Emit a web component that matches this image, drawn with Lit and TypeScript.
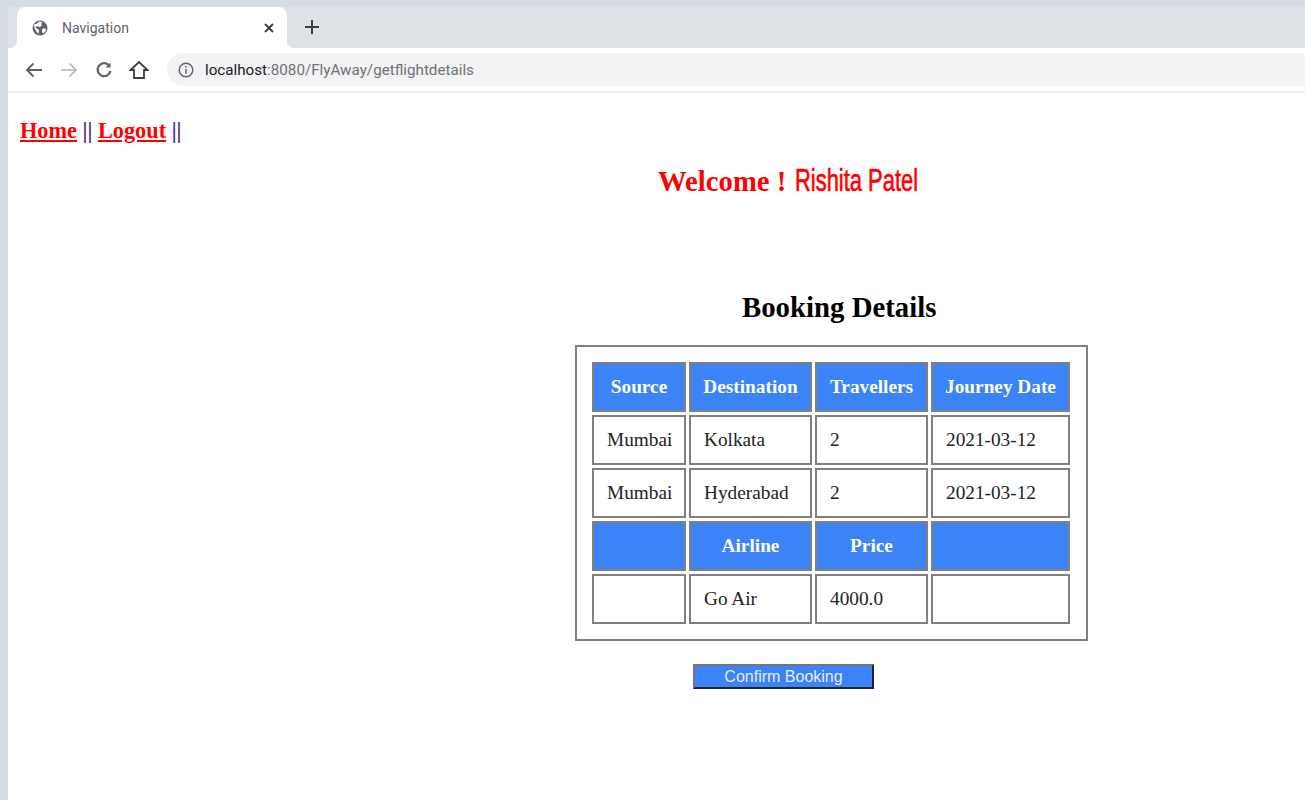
import { LitElement, html, css } from 'lit';
import { customElement } from 'lit/decorators.js';

const BOOKINGS = [
  ['Mumbai', 'Kolkata', '2', '2021-03-12'],
  ['Mumbai', 'Hyderabad', '2', '2021-03-12'],
];

@customElement('app-root')
export class AppRoot extends LitElement {
  static styles = css`
    :host {
      display: block;
      height: 800px;
      overflow: hidden;
      background: #d6dce4;
      padding: 7px 0 0 8px;
      box-sizing: border-box;
      font-family: 'Liberation Serif', serif;
    }
    .tabbar {
      height: 41px;
      background: #dee1e6;
      display: flex;
      align-items: flex-end;
      padding-left: 9px;
    }
    .tab {
      position: relative;
      width: 270px;
      height: 41px;
      background: #fff;
      border-radius: 8px 8px 0 0;
      display: flex;
      align-items: center;
      box-sizing: border-box;
      padding: 0 12px 0 15px;
      font: 14px 'Roboto', sans-serif;
      color: #5f6368;
    }
    .tab::before,
    .tab::after {
      content: '';
      position: absolute;
      bottom: 0;
      width: 8px;
      height: 8px;
    }
    .tab::before {
      left: -8px;
      background: radial-gradient(circle at 0 0, transparent 8px, #fff 8.5px);
    }
    .tab::after {
      right: -8px;
      background: radial-gradient(circle at 100% 0, transparent 8px, #fff 8.5px);
    }
    .tab-title {
      flex: 1;
      margin-left: 14px;
    }
    .new-tab {
      margin: 0 0 4px 17px;
      height: 35px;
      display: flex;
      align-items: center;
    }
    .toolbar {
      height: 43px;
      background: #fff;
      display: flex;
      align-items: center;
      padding-left: 16px;
      border-bottom: 2px solid #eceef0;
    }
    .nav-icon {
      width: 20px;
      height: 20px;
      margin-right: 15px;
      flex: none;
    }
    .omnibox {
      flex: 1;
      height: 33px;
      margin-left: 3px;
      background: #f1f3f4;
      border-radius: 16px 0 0 16px;
      display: flex;
      align-items: center;
      padding-left: 11px;
      font: 15.2px 'Roboto', sans-serif;
      color: #6f7276;
    }
    .omnibox b {
      font-weight: 400;
      color: #202124;
    }
    .omnibox svg {
      margin-right: 11px;
    }
    .page {
      background: #fff;
      height: 707px;
      display: flex;
      flex-direction: column;
      align-items: flex-start;
    }
    .links {
      margin: 25px 0 0 12px;
      font-size: 22.3px;
      font-weight: 700;
      line-height: 25px;
      color: #4a2a7a;
    }
    .links a {
      color: #f00;
      text-decoration: underline;
    }
    .welcome {
      margin: 20px 0 0 650px;
      height: 32px;
      display: flex;
      align-items: baseline;
      color: #f00;
      font-size: 28.7px;
      font-weight: 700;
      white-space: nowrap;
    }
    .name {
      display: inline-block;
      margin-left: 9px;
      font: 400 31px 'Liberation Sans', sans-serif;
      -webkit-text-stroke: 0.6px #f00;
      transform: scaleX(0.707);
      transform-origin: left center;
    }
    h2 {
      margin: 96px 0 0 734px;
      font-size: 28.8px;
      line-height: 32px;
      font-weight: 700;
      color: #000;
    }
    table {
      margin: 22px 0 0 567px;
      width: 513px;
      box-sizing: border-box;
      border: 2px solid #808080;
      border-spacing: 3px;
      border-collapse: separate;
      padding: 12px 13px 12px 12px;
      table-layout: fixed;
      font-size: 19.3px;
    }
    td,
    th {
      height: 50px;
      box-sizing: border-box;
      border: 2px solid #808080;
      padding: 0 13px;
      text-align: left;
      color: #222;
      font-weight: 400;
    }
    th {
      background: #3b83f6;
      color: #fff;
      font-weight: 700;
      text-align: center;
      padding: 0;
    }
    .col-source {
      width: 94px;
    }
    .col-dest {
      width: 123px;
    }
    .col-trav {
      width: 113px;
    }
    .confirm {
      margin: 23px 0 0 685px;
      width: 181px;
      height: 25px;
      box-sizing: border-box;
      padding: 0;
      background: #3b83f6;
      color: #e4edfb;
      font: 16px 'Liberation Sans', sans-serif;
      border: 2px solid;
      border-color: #767676 #1c2733 #1c2733 #767676;
    }
  `;

  render() {
    return html`
      <div class="tabbar">
        <div class="tab">
          <svg width="16" height="16" viewBox="0 0 16 16">
            <circle cx="8" cy="8" r="7.5" fill="#5f6368" />
            <path
              d="M2 4.5 5 3.5 7 1.5 10.5 2 9 4 10 5.5 7.5 7 5 6 3.5 7.5 7 10 6.5 14 4.5 11.5 2.5 8.5zM10.5 8.5 13.5 8.5 14 10.5 11.500 13.500 10 12z"
              fill="#fff"
            />
          </svg>
          <span class="tab-title">Navigation</span>
          <svg width="12" height="12" viewBox="0 0 12 12">
            <path d="M2 2l8 8M10 2l-8 8" stroke="#3c4043" stroke-width="1.9" />
          </svg>
        </div>
        <div class="new-tab">
          <svg width="16" height="16" viewBox="0 0 16 16">
            <path d="M8 1v14M1 8h14" stroke="#3c4043" stroke-width="2" />
          </svg>
        </div>
      </div>
      <div class="toolbar">
        <svg class="nav-icon" viewBox="0 0 20 20" fill="none" stroke="#5f6368" stroke-width="1.9">
          <path d="M18 10H3M9.500 3.500 3 10l6.500 6.500" />
        </svg>
        <svg class="nav-icon" viewBox="0 0 20 20" fill="none" stroke="#b4b6b9" stroke-width="1.6">
          <path d="M2 10h15M10.500 3.500 17 10l-6.500 6.500" />
        </svg>
        <svg class="nav-icon" viewBox="0 0 20 20" fill="none" stroke="#5f6368" stroke-width="2.2">
          <path d="M15.500 6A6.500 6.500 0 1 0 16.500 11" />
          <path d="M16.500 2.500V7.500H11.500" fill="#5f6368" stroke="none" />
        </svg>
        <svg class="nav-icon" viewBox="0 0 20 20" fill="none" stroke="#3c4043" stroke-width="1.8">
          <path d="M10 2 1.500 10H5v8h10v-8h3.500z" />
        </svg>
        <div class="omnibox">
          <svg width="16" height="16" viewBox="0 0 16 16" fill="none" stroke="#5f6368" stroke-width="1.4">
            <circle cx="8" cy="8" r="6.800" />
            <path d="M8 7v5M8 4v1.600" />
          </svg>
          <span><b>localhost</b>:8080/FlyAway/getflightdetails</span>
        </div>
      </div>
      <div class="page">
        <div class="links">
          <a href="#">Home</a> || <a href="#">Logout</a> ||
        </div>
        <div class="welcome">Welcome !<span class="name">Rishita Patel</span></div>
        <h2>Booking Details</h2>
        <table>
          <tr>
            <th class="col-source">Source</th>
            <th class="col-dest">Destination</th>
            <th class="col-trav">Travellers</th>
            <th>Journey Date</th>
          </tr>
          ${BOOKINGS.map(
            (row) => html`<tr>${row.map((cell) => html`<td>${cell}</td>`)}</tr>`
          )}
          <tr>
            <th></th>
            <th>Airline</th>
            <th>Price</th>
            <th></th>
          </tr>
          <tr>
            <td></td>
            <td>Go Air</td>
            <td>4000.0</td>
            <td></td>
          </tr>
        </table>
        <button class="confirm">Confirm Booking</button>
      </div>
    `;
  }
}
